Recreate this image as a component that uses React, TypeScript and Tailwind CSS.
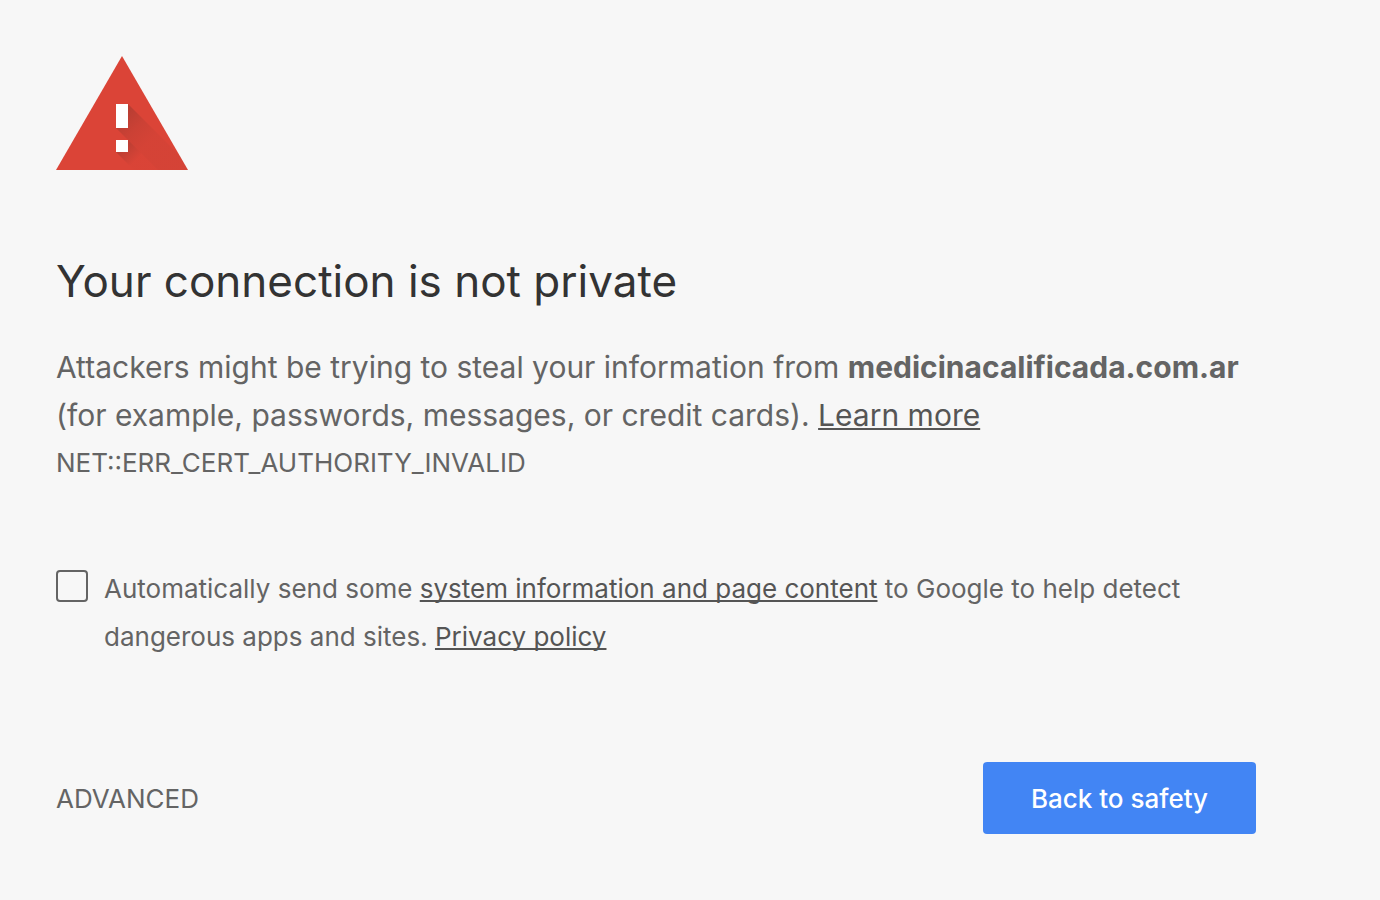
import { useState } from "react";

const linkClass =
  "text-[#555] underline decoration-2 underline-offset-2 [text-decoration-skip-ink:none]";

function WarningIcon() {
  return (
    <svg width="132" height="114" viewBox="0 0 132 114" aria-hidden="true">
      <defs>
        <linearGradient id="bar-shadow" x1="66" y1="60" x2="92" y2="86" gradientUnits="userSpaceOnUse">
          <stop offset="0" stopColor="#3e2723" stopOpacity="0.22" />
          <stop offset="0.5" stopColor="#3e2723" stopOpacity="0.1" />
          <stop offset="1" stopColor="#3e2723" stopOpacity="0.04" />
        </linearGradient>
        <linearGradient id="dot-shadow" x1="66" y1="90" x2="80" y2="104" gradientUnits="userSpaceOnUse">
          <stop offset="0" stopColor="#3e2723" stopOpacity="0.22" />
          <stop offset="1" stopColor="#3e2723" stopOpacity="0.01" />
        </linearGradient>
      </defs>
      <path d="M66 0L132 114H0Z" fill="#db4437" />
      <path d="M72 48L124 100L132 114H102L60 72H72Z" fill="url(#bar-shadow)" />
      <path d="M72 84L102 114H78L60 96H72Z" fill="url(#dot-shadow)" />
      <path d="M60 48H72V72H60ZM60 84H72V96H60Z" fill="#fff" />
    </svg>
  );
}

export default function App() {
  const [reporting, setReporting] = useState(false);

  return (
    <div className="min-h-screen bg-[#f7f7f7] px-14 pt-14 pb-16 font-['Inter','Liberation_Sans',sans-serif] text-[#646464]">
      <main className="max-w-[1200px]">
        <WarningIcon />

        <h1 className="mt-20 text-[44px] leading-[62px] text-[#333]">Your connection is not private</h1>

        <p className="mt-[31px] text-[30px] leading-[48px]">
          Attackers might be trying to steal your information from{" "}
          <strong>medicinacalificada.com.ar</strong> (for example, passwords, messages, or credit
          cards).{" "}
          <a href="#learn-more" className={linkClass}>
            Learn more
          </a>
        </p>
        <p className="text-[26px] leading-[48px]">NET::ERR_CERT_AUTHORITY_INVALID</p>

        <div className="mt-[78px] flex items-start gap-4">
          <input
            id="reporting"
            type="checkbox"
            checked={reporting}
            onChange={(e) => setReporting(e.target.checked)}
            className="mt-[5px] size-8 shrink-0 appearance-none rounded border-2 border-[#646464] checked:bg-[#4285f4]"
          />
          <label htmlFor="reporting" className="text-[26px] leading-[48px]">
            Automatically send some{" "}
            <a href="#system-information" className={linkClass}>
              system information and page content
            </a>{" "}
            to Google to help detect dangerous apps and sites.{" "}
            <a href="#privacy" className={linkClass}>
              Privacy policy
            </a>
          </label>
        </div>

        <div className="mt-[101px] flex items-center justify-between">
          <button type="button" className="text-[26px]">
            ADVANCED
          </button>
          <button
            type="button"
            className="h-[72px] rounded-sm bg-[#4285f4] px-12 text-[26px] font-medium text-white"
          >
            Back to safety
          </button>
        </div>
      </main>
    </div>
  );
}
